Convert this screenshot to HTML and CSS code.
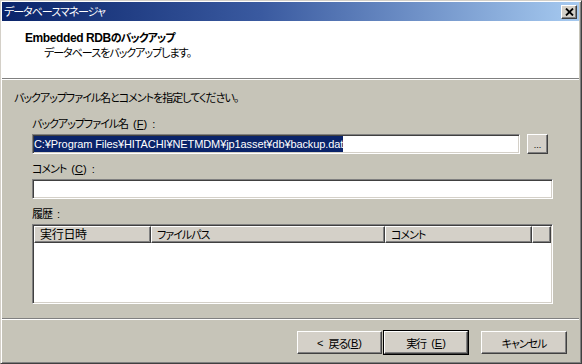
FILE: index.html
```html
<!DOCTYPE html>
<html lang="ja">
<head>
<meta charset="utf-8">
<title>データベースマネージャ</title>
<link rel="stylesheet" href="styles.css">
</head>
<body>
<div class="win">
  <div class="titlebar">
    <span class="title-text">データベースマネージャ</span>
    <div class="close">
      <svg width="9" height="8" viewBox="0 0 9 8"><path d="M1 0.5 L8 7.5 M8 0.5 L1 7.5" stroke="#000" stroke-width="1.8" fill="none"/></svg>
    </div>
  </div>
  <div class="header">
    <div class="h-title"><span class="lat">Embedded RDB</span><span class="jp">のバックアップ</span></div>
    <div class="h-sub">データベースをバックアップします。</div>
  </div>
  <div class="sep"></div>
  <div class="content">
    <div class="intro">バックアップファイル名とコメントを指定してください。</div>
    <div class="form">
      <div class="label">バックアップファイル名<span class="acc"> (<u>F</u>) :</span></div>
      <div class="row">
        <div class="input file"><span class="sel">C:¥Program Files¥HITACHI¥NETMDM¥jp1asset¥db¥backup.dat</span></div>
        <div class="btn browse">...</div>
      </div>
      <div class="label">コメント<span class="acc"> (<u>C</u>) :</span></div>
      <div class="input comment"></div>
      <div class="label">履歴<span class="acc"> :</span></div>
      <div class="list">
        <div class="list-head">
          <div class="col c1">実行日時</div>
          <div class="col c2">ファイルパス</div>
          <div class="col c3">コメント</div>
          <div class="col c4"></div>
        </div>
      </div>
    </div>
  </div>
  <div class="sep"></div>
  <div class="footer">
    <div class="btn push back"><span class="acc">&lt; </span>戻る<span class="acc">(<u>B</u>)</span></div>
    <div class="default-wrap"><div class="btn push exec">実行<span class="acc"> (<u>E</u>)</span></div></div>
    <div class="btn push cancel">キャンセル</div>
  </div>
</div>
</body>
</html>
```

FILE: styles.css
```css
* { box-sizing: border-box; }
html, body { margin: 0; padding: 0; background: #c6c4b8; }
body {
  font-family: "Noto Sans CJK JP", "Liberation Sans", sans-serif;
  font-size: 11px;
  letter-spacing: -1px;
  font-feature-settings: "palt";
  color: #000;
}
.acc {
  letter-spacing: 0;
  word-spacing: 2px;
  font-family: "Liberation Sans", sans-serif;
  font-size: 11px;
  white-space: pre;
}
.win {
  width: 582px;
  height: 364px;
  background: #c6c4b8;
  border-style: solid;
  border-width: 1px;
  border-color: #d4d0c8 #404040 #404040 #d4d0c8;
  box-shadow: inset 1px 1px #fff, inset -1px -1px #808080;
  padding: 1px 2px 2px 1px;
  display: flex;
  flex-direction: column;
}
.titlebar {
  height: 19px;
  flex: none;
  background: linear-gradient(to right, #0a246a 0%, #3a5aa0 45%, #a6caf0 100%);
  display: flex;
  align-items: center;
  justify-content: space-between;
  padding: 0 2px 0 2px;
  color: #fff;
}
.title-text { line-height: 19px; font-size: 11px; }
.close {
  width: 16px;
  height: 14px;
  background: #d4d0c8;
  border-style: solid;
  border-width: 1px;
  border-color: #fff #404040 #404040 #fff;
  box-shadow: inset -1px -1px #808080;
  display: flex;
  align-items: center;
  justify-content: center;
}
.header {
  height: 57px;
  flex: none;
  background: #fff;
  padding: 9px 0 0 23px;
}
.h-title { font-weight: bold; line-height: 14px; }
.h-title .lat {
  font-family: "Liberation Sans", sans-serif;
  font-size: 12px;
  letter-spacing: -0.4px;
}
.h-title .jp { font-size: 11px; letter-spacing: -1px; }
.h-sub { line-height: 14px; padding-left: 19px; }
.sep {
  height: 2px;
  flex: none;
  border-top: 1px solid #808080;
  border-bottom: 1px solid #fff;
}
.content {
  flex: 1;
  padding: 10px 26px 0 12px;
}
.intro { line-height: 14px; }
.form { padding: 12px 0 0 18px; }
.label { line-height: 14px; margin-bottom: 3px; }
.row { display: flex; margin-bottom: 7px; }
.input {
  height: 20px;
  background: #fff;
  border-style: solid;
  border-width: 1px;
  border-color: #808080 #fff #fff #808080;
  box-shadow: inset 1px 1px #404040, inset -1px -1px #d4d0c8;
  padding: 1px 0 0 1px;
}
.input.file { flex: 1; }
.input.comment { margin-bottom: 7px; }
.sel {
  display: inline-block;
  vertical-align: top;
  background: #0a246a;
  color: #fff;
  font-family: "Liberation Sans", sans-serif;
  font-size: 11px;
  letter-spacing: -0.1px;
  line-height: 16px;
  height: 16px;
}
.btn {
  background: #d4d0c8;
  border-style: solid;
  border-width: 1px;
  border-color: #fff #404040 #404040 #fff;
  box-shadow: inset -1px -1px #808080;
  display: flex;
  align-items: center;
  justify-content: center;
}
.browse {
  width: 21px;
  height: 20px;
  margin: 0 5px 0 7px;
  font-size: 9px;
  letter-spacing: 0;
  font-family: "Liberation Sans", sans-serif;
  line-height: 1;
  padding-top: 2px;
}
.list {
  height: 80px;
  background: #fff;
  border-style: solid;
  border-width: 1px;
  border-color: #808080 #fff #fff #808080;
  box-shadow: inset 1px 1px #404040, inset -1px -1px #d4d0c8;
  padding: 1px;
}
.list-head { display: flex; height: 17px; }
.col {
  height: 17px;
  background: #d4d0c8;
  border-style: solid;
  border-width: 1px;
  border-color: #fff #404040 #404040 #fff;
  box-shadow: inset -1px -1px #808080;
  line-height: 14px;
  padding-left: 5px;
  white-space: nowrap;
}
.c1 { width: 117px; font-size: 12px; letter-spacing: -0.3px; }
.c2 { width: 234px; }
.c3 { width: 147px; }
.c4 { flex: 1; }
.footer {
  height: 41px;
  flex: none;
  display: flex;
  justify-content: flex-end;
  align-items: flex-start;
  padding: 11px 12px 0 0;
}
.push { height: 23px; line-height: 14px; }
.back { width: 85px; }
.default-wrap {
  border: 1px solid #000;
  margin: -1px 0 0 1px;
  width: 86px;
  height: 25px;
}
.exec { width: 84px; height: 23px; }
.cancel { width: 86px; margin-left: 12px; }
```
